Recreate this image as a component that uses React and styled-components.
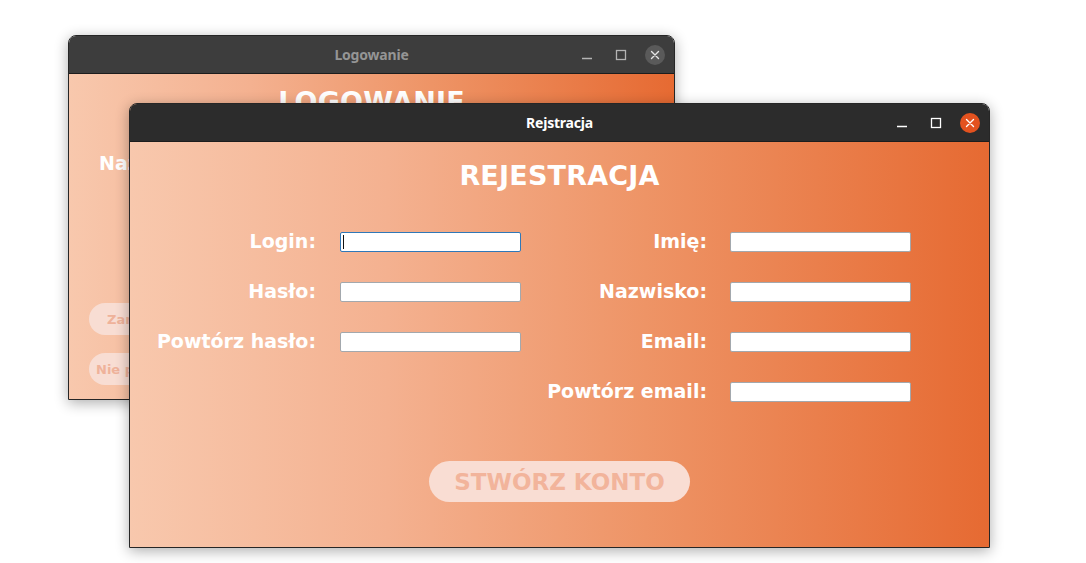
import React from "react";
import styled, { createGlobalStyle } from "styled-components";

const Global = createGlobalStyle`
  html, body { margin: 0; padding: 0; background: #ffffff; }
  body { font-family: "DejaVu Sans", sans-serif; }
`;

const Desktop = styled.div`
  position: relative;
  width: 1086px;
  height: 563px;
  overflow: hidden;
  background: #ffffff;
`;

const Win = styled.div`
  position: absolute;
  left: ${(p) => p.$x}px;
  top: ${(p) => p.$y}px;
  width: ${(p) => p.$w}px;
  height: ${(p) => p.$h}px;
  box-sizing: border-box;
  display: flex;
  flex-direction: column;
  border: 1px solid #262626;
  border-radius: 8px 8px 0 0;
  overflow: hidden;
  box-shadow: 0 3px 14px rgba(0, 0, 0, 0.32);
`;

const TitleBar = styled.div`
  position: relative;
  height: 37px;
  flex: none;
  display: flex;
  align-items: center;
  justify-content: center;
  background: ${(p) => (p.$active ? "#2c2c2c" : "#3d3d3d")};
  border-bottom: 1px solid #1d1d1d;
`;

const Title = styled.span`
  font-family: "Noto Sans", "Open Sans", sans-serif;
  font-weight: 700;
  font-size: 14px;
  letter-spacing: -0.2px;
  color: ${(p) => (p.$active ? "#ffffff" : "#959595")};
`;

const Controls = styled.div`
  position: absolute;
  right: 9px;
  top: 0;
  bottom: 0;
  display: flex;
  align-items: center;
  gap: 14px;
`;

const CtlBtn = styled.div`
  width: 20px;
  height: 20px;
  display: flex;
  align-items: center;
  justify-content: center;
  border-radius: 50%;
  background: ${(p) => p.$bg || "transparent"};
  color: ${(p) => p.$fg};
`;

const Content = styled.div`
  flex: 1;
  display: flex;
  flex-direction: column;
  background: linear-gradient(90deg, #f8c8ad 0%, #f4b190 30%, #ee9466 60%, #e66a32 100%);
`;

const Heading = styled.h1`
  margin: 0;
  padding-top: ${(p) => p.$pt}px;
  text-align: center;
  font-family: "DejaVu Sans", sans-serif;
  font-weight: 700;
  font-size: 27px;
  line-height: 30px;
  color: #ffffff;
  letter-spacing: 0.2px;
`;

const FormGrid = styled.div`
  margin-top: 25px;
  display: grid;
  grid-template-columns: 210px 181px 209px 181px;
  grid-auto-rows: 50px;
  align-items: center;
`;

const Label = styled.label`
  text-align: right;
  padding-right: ${(p) => p.$pr}px;
  font-family: "DejaVu Sans", sans-serif;
  font-weight: 700;
  font-size: 19px;
  color: #ffffff;
  white-space: nowrap;
  grid-column: ${(p) => p.$col};
`;

const Field = styled.div`
  position: relative;
  grid-column: ${(p) => p.$col};
  box-sizing: border-box;
  width: 181px;
  height: 20px;
  margin-top: 2px;
  background: #ffffff;
  border: 1px solid ${(p) => (p.$focused ? "#2f78b8" : "#a3a8ad")};
  border-radius: 2px;
  ${(p) =>
    p.$focused &&
    `&::after{content:"";position:absolute;left:2px;top:2px;width:1px;height:14px;background:#111;}`}
`;

const Center = styled.div`
  display: flex;
  justify-content: center;
  margin-top: 45px;
`;

const PillButton = styled.button`
  box-sizing: border-box;
  width: 261px;
  height: 41px;
  border: none;
  border-radius: 21px;
  background: #f9ddd3;
  color: #f2b49b;
  font-family: "DejaVu Sans", sans-serif;
  font-weight: 700;
  font-size: 23px;
  padding: 0;
`;

const BackRow = styled.div`
  margin-top: 35px;
  padding-left: 30px;
  font-family: "DejaVu Sans", sans-serif;
  font-weight: 700;
  font-size: 19px;
  color: #ffffff;
  white-space: nowrap;
`;

const BackButtons = styled.div`
  margin-top: 129px;
  padding-left: 20px;
  display: flex;
  flex-direction: column;
  gap: 18px;
`;

const SmallPill = styled.button`
  box-sizing: border-box;
  width: 170px;
  height: 32px;
  border: none;
  border-radius: 16px;
  background: #f8ddd3;
  color: #efb29a;
  font-family: "DejaVu Sans", sans-serif;
  font-weight: 700;
  font-size: 13px;
  text-align: left;
  padding: 0 0 0 ${(p) => p.$pl}px;
`;

function WindowControls({ active }) {
  const stroke = active ? "#ffffff" : "#b4b4b4";
  return (
    <Controls>
      <CtlBtn $fg={stroke}>
        <svg width="12" height="12" viewBox="0 0 12 12">
          <line x1="1" y1="9.5" x2="11" y2="9.5" stroke={stroke} strokeWidth="1.3" />
        </svg>
      </CtlBtn>
      <CtlBtn $fg={stroke}>
        <svg width="12" height="12" viewBox="0 0 12 12">
          <rect x="1.5" y="1.5" width="9" height="9" fill="none" stroke={stroke} strokeWidth="1.3" />
        </svg>
      </CtlBtn>
      <CtlBtn $bg={active ? "#e3521f" : "#5a5a5a"} $fg="#fff">
        <svg width="10" height="10" viewBox="0 0 10 10">
          <path d="M1.5 1.5 L8.5 8.5 M8.5 1.5 L1.5 8.5" stroke={active ? "#ffffff" : "#e6e6e6"} strokeWidth="1.4" strokeLinecap="round" />
        </svg>
      </CtlBtn>
    </Controls>
  );
}

export default function App() {
  return (
    <>
      <Global />
      <Desktop>
        <Win $x={68} $y={35} $w={607} $h={365}>
          <TitleBar>
            <Title>Logowanie</Title>
            <WindowControls active={false} />
          </TitleBar>
          <Content>
            <Heading $pt={13}>LOGOWANIE</Heading>
            <BackRow>Nazwa użytkownika:</BackRow>
            <BackButtons>
              <SmallPill $pl={18}>Zarejestruj się</SmallPill>
              <SmallPill $pl={7}>Nie pamiętam hasła</SmallPill>
            </BackButtons>
          </Content>
        </Win>

        <Win $x={129} $y={103} $w={861} $h={445}>
          <TitleBar $active>
            <Title $active>Rejstracja</Title>
            <WindowControls active />
          </TitleBar>
          <Content>
            <Heading $pt={19}>REJESTRACJA</Heading>
            <FormGrid>
              <Label $col={1} $pr={24}>Login:</Label>
              <Field $col={2} $focused />
              <Label $col={3} $pr={23}>Imię:</Label>
              <Field $col={4} />

              <Label $col={1} $pr={24}>Hasło:</Label>
              <Field $col={2} />
              <Label $col={3} $pr={23}>Nazwisko:</Label>
              <Field $col={4} />

              <Label $col={1} $pr={24}>Powtórz hasło:</Label>
              <Field $col={2} />
              <Label $col={3} $pr={23}>Email:</Label>
              <Field $col={4} />

              <Label $col={3} $pr={23}>Powtórz email:</Label>
              <Field $col={4} />
            </FormGrid>
            <Center>
              <PillButton>STWÓRZ KONTO</PillButton>
            </Center>
          </Content>
        </Win>
      </Desktop>
    </>
  );
}
